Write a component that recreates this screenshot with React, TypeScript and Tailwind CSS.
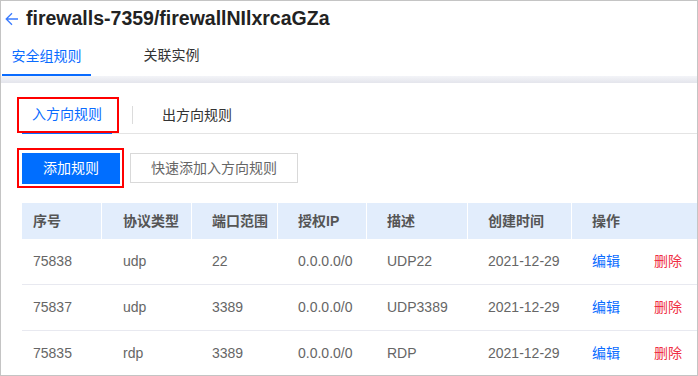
import React from "react";

const font = "font-['Liberation_Sans','Noto_Sans_CJK_SC',sans-serif]";

const cols = [
  { label: "序号", w: "w-[80px]", pl: "pl-[11px]" },
  { label: "协议类型", w: "w-[90px]", pl: "pl-[21px]" },
  { label: "端口范围", w: "w-[86px]", pl: "pl-[20px]" },
  { label: "授权IP", w: "w-[89px]", pl: "pl-[20px]" },
  { label: "描述", w: "w-[101px]", pl: "pl-[20px]" },
  { label: "创建时间", w: "w-[104px]", pl: "pl-[20px]" },
  { label: "操作", w: "flex-1", pl: "pl-[20px]" },
];

const rows = [
  ["75838", "udp", "22", "0.0.0.0/0", "UDP22", "2021-12-29"],
  ["75837", "udp", "3389", "0.0.0.0/0", "UDP3389", "2021-12-29"],
  ["75835", "rdp", "3389", "0.0.0.0/0", "RDP", "2021-12-29"],
];

export default function App() {
  return (
    <div className={`w-[698px] h-[376px] border border-[#c4c4c4] bg-white overflow-hidden ${font}`}>
      {/* header */}
      <div className="h-[75px]">
        <div className="flex items-center h-[36px] pl-[4px]">
          <svg width="14" height="14" viewBox="0 0 14 14" fill="none" stroke="#3a7bff" strokeWidth="1.3">
            <path d="M13 7H1.5M7 1.2L1.2 7L7 12.8" />
          </svg>
          <h1 className="ml-[7px] text-[19.5px] font-bold text-[#222] leading-none">
            firewalls-7359/firewallNIlxrcaGZa
          </h1>
        </div>
        <div className="flex h-[39px] text-[14px]">
          <div className="w-[89px] ml-[1px] flex items-center justify-center border-b-[2px] border-[#0a6cff] text-[#0a6cff] pt-[1px]">
            安全组规则
          </div>
          <div className="w-[89px] ml-[36px] flex items-center justify-center text-[#333] pb-[2px]">
            关联实例
          </div>
        </div>
      </div>
      <div className="h-[7px] bg-gradient-to-b from-[#f3f4f8] to-[#e4e5ec]" />

      {/* body */}
      <div className="pl-[21px]">
        <div className="relative mt-[14px] flex items-center h-[37px] border-b border-[#e4e4e4] text-[14px]">
          <div className="relative w-[90px] h-full flex items-center justify-center text-[#0a6cff] border-b-[2px] border-[#0a6cff] -mb-[1px]">
            入方向规则
            <div className="absolute left-[-5px] right-[-7px] top-[-1px] bottom-[-1px] border-2 border-[#ff0000]" />
          </div>
          <div className="ml-[20px] w-px h-[18px] bg-[#dcdcdc]" />
          <div className="ml-[19px] w-[90px] h-full flex items-center justify-center text-[#333]">
            出方向规则
          </div>
        </div>

        <div className="mt-[19px] flex items-start gap-[10px] text-[14px]">
          <div className="relative">
            <button className="w-[98px] h-[31px] bg-[#006eff] text-white">添加规则</button>
            <div className="absolute left-[-5px] right-[-4px] top-[-5px] bottom-[-4px] border-2 border-[#ff0000]" />
          </div>
          <button className="w-[168px] h-[30px] border border-[#d9d9d9] text-[#666] bg-white">快速添加入方向规则</button>
        </div>

        <div className="mt-[19px] text-[14px]">
          <div className="flex h-[36px] bg-[#e2edfc] text-[#555] font-bold">
            {cols.map((c, i) => (
              <div
                key={c.label}
                className={`${c.w} ${c.pl} flex items-center ${i < cols.length - 1 ? "border-r border-white" : ""}`}
              >
                {c.label}
              </div>
            ))}
          </div>
          {rows.map((r) => (
            <div key={r[0]} className="flex h-[46px] border-b border-[#e8e9f0] text-[#666]">
              {r.map((v, i) => (
                <div key={i} className={`${cols[i].w} ${cols[i].pl} flex items-center`}>
                  {v}
                </div>
              ))}
              <div className="flex-1 pl-[20px] flex items-center">
                <span className="text-[#0a6cff]">编辑</span>
                <span className="ml-[34px] text-[#ef2f45]">删除</span>
              </div>
            </div>
          ))}
        </div>
      </div>
    </div>
  );
}
